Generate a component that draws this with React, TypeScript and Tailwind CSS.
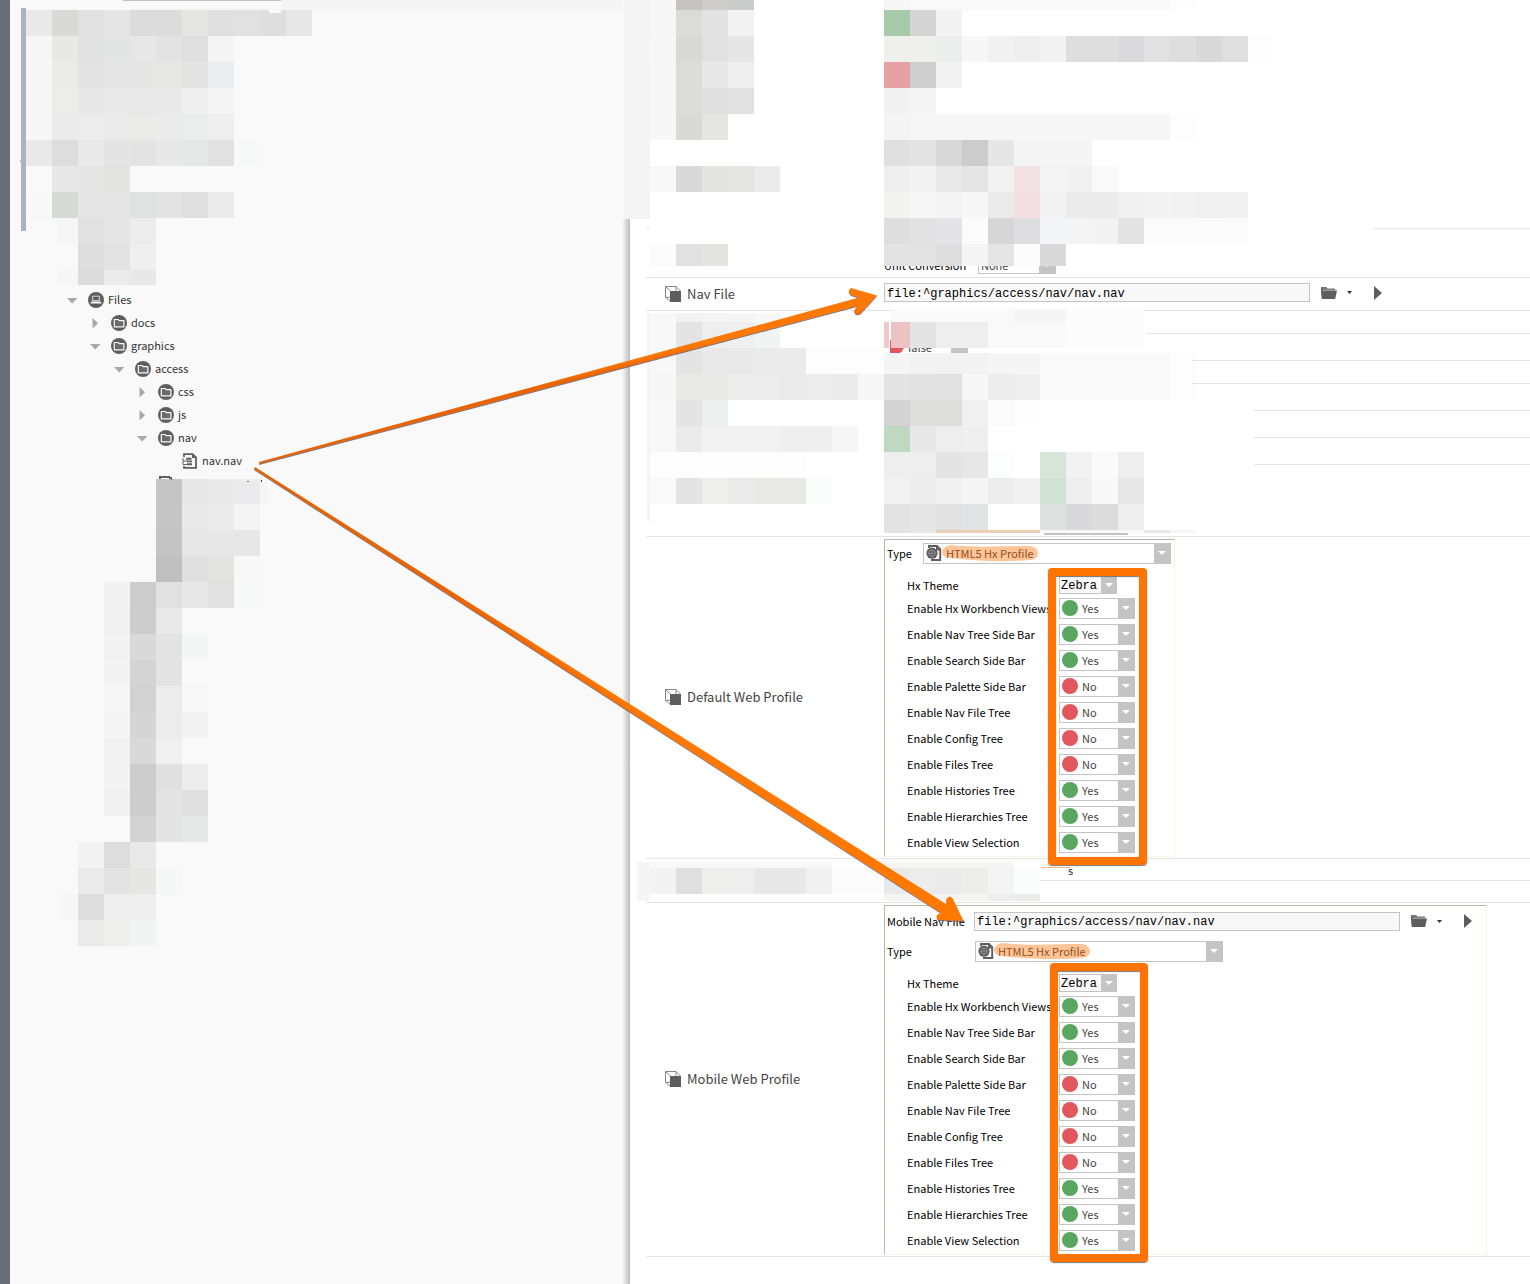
import { useState } from "react";
import type { ReactNode } from "react";

type Strip = [x: number, y: number, h: number, colors: string];

const CELL = 26;

/* Paints strips of colour cells; a "." leaves a cell clear and "*n" repeats a colour. */
function Cells({ strips }: { strips: Strip[] }) {
  const rects: ReactNode[] = [];
  strips.forEach(([startX, y, h, colors], s) => {
    let x = startX;
    colors.split(" ").forEach((token, i) => {
      const [color, times] = token.split("*");
      const count = Number(times ?? 1);
      const end = (Math.floor(x / CELL) + count) * CELL;
      if (color !== ".") {
        rects.push(<rect key={`${s}-${i}`} x={x} y={y} width={end - x} height={h} fill={`#${color}`} />);
      }
      x = end;
    });
  });
  return <>{rects}</>;
}

function Mosaic({ x, y, className, strips, children }: { x: number; y: number; className: string; strips: Strip[]; children?: ReactNode }) {
  return (
    <svg aria-hidden="true" className={`pointer-events-none relative z-10 block w-full overflow-visible ${className}`} shapeRendering="crispEdges">
      <g transform={`translate(${-x} ${-y})`}>
        <Cells strips={strips} />
        {children}
      </g>
    </svg>
  );
}

const treeTop: Strip[] = [
  [26, 10, 26, "e9e9e9 d9d9d6 e1e1e1 e5e5e5 dcdcdc dcdcdc e5e5e3 e0e0e0 e1e1e1 dedede e7e7e7"],
  [26, 36, 26, "f6f6f6 e8e8e5 e2e2e2 e2e5e4 e7e7e7 e3e3e3 e0e0e0 f4f4f4"],
  [26, 62, 26, "f6f6f6 ebebe8 e4e4e4 e6e6e6 e6e6e6 e7e7e4 e3e3e3 ebedef"],
  [26, 88, 26, "f7f7f7 ecece9 e8e8e8 e9e9e9 e9e9e9 e9e9e9 efefef f4f4f4"],
  [26, 114, 26, "f7f7f7 ebebeb ececec ebebeb eaeae7 ebebeb eaedec eeeeee"],
  [26, 140, 26, "e9e9e9 dddddd e9e9e9 e4e4e4 e3e3e3 e8e8e8 e4e8e7 e1e1e1 f6f9f8"],
  [52, 166, 26, "e8e8e8 e6e6e6 e3e3e0"],
  [26, 192, 26, "f8f8f8 d4dad6 e5e5e5 e6e6e6 dfe2e1 e3e3e3 e0e0e0 ebebeb"],
  [58, 218, 26, "f6f6f6 e1e1e1 e5e5e5 ececec"],
  [78, 244, 26, "dddddd e3e3e3 efefef"],
  [58, 270, 15, "f6f6f6 dcdcdc ebebeb e8e8e8"],
];

const treeBottom: Strip[] = [
  [156, 479, 25, "c5c5c5 e7e7e7 e9e9e9 ebebed"],
  [156, 504, 26, "c5c5c5 e9e9e9 ebebeb f4f4f4"],
  [156, 530, 26, "c4c4c4 e7e7e7 e7e7e7 e7e7e7"],
  [156, 556, 26, "c0c0c0 e0e0e0 e3e3e1 f8f8f8"],
  [104, 582, 26, "f1f1f1 cccccc e1e1e1 e7e7e7 e1e1e1 f6f9f8"],
  [104, 608, 26, "f1f1f1 cdcdcd e9e9e9"],
  [104, 634, 26, "f2f2f2 d9d9d9 e3e3e3 f3f6f5"],
  [104, 660, 26, "f3f3f3 d4d4d4 e3e3e3"],
  [104, 686, 26, "f6f6f6 d2d2d2 ececec f8f8f8"],
  [104, 712, 26, "f5f5f5 d5d5d5 ececec f3f3f3"],
  [104, 738, 26, "f2f2f2 d9d9d9 f0f0f0"],
  [104, 764, 26, "f2f2f2 cdcdcd e0e0e0 ececec"],
  [104, 790, 26, "f1f1f1 cdcdcd e4e4e4 dfdfdf"],
  [130, 816, 26, "d3d3d3 e4e4e4 e6e9e8"],
  [78, 842, 26, "f2f2f2 dddddd e9e9e9"],
  [78, 868, 26, "eaeaea e3e3e3 e6e6e3 f5f8f7"],
  [62, 894, 26, "f6f6f6 dddddd eeeeee eeeeee"],
  [78, 920, 26, "eaeaea eeeeeb f2f4f3"],
];

const sheetTop: Strip[] = [
  [650, 0, 10, "f7f7f7 c5c3c1 cfcdcb cacccb .*5 f7f7f7 f9f9f9*10 fdfdfd"],
  [650, 10, 26, "f7f7f7 dbdbd8 e2e2e2 f2f2f2 .*5 a6cbaa d5d5d5 f3f3f3"],
  [650, 36, 26, "f6f6f6 d8d8d6 e1e1e1 e6e6e6 .*5 efefec efefec ebeeed f7f7f7 f1f1f1 eeeeee f3f3f3 dedede dedede dadadd e1e1e1 dedede d9d9d9 dfdfdf fdfdfd"],
  [650, 62, 26, "f7f7f7 dcdcd9 e8e8e8 eeeeee .*5 e5a0a3 cecece f2f2f2"],
  [650, 88, 26, "f7f7f7 dcdcd9 e0e0e0 e1e1e1 .*5 f1f1f1 f4f4f4"],
  [650, 114, 26, "f7f7f7 d9d9d6 e5e5e2 .*6 f4f4f4 f6f6f6*10 fdfdfd"],
  [884, 140, 26, "e0e0e0 e3e3e3 d8d8d8 cccccc e6e6e6 f5f5f5*3"],
  [650, 166, 26, "f8f8f8 d9d9d9 e4e4e1 e5e5e2 ebebeb .*4 efefef f2f2f2 e9e9e9 e5e5e5 f2f2f2 f3e2e3 f4f4f4 f1f1f1 f9f9f9"],
  [884, 192, 26, "f3f3f0 f7f7f7 f4f4f4 f7f7f7 ebebeb f4dfe1 f3f3f3 ebebeb ebebeb f0f0f0 f3f3f3 f2f2f2 f0f0f0 f1f1f1"],
  [884, 218, 26, "dedede e2e2e2 e4e4e7 fbfbfb d6d6d6 dedee1 f3f4f7 f4f4f4 f3f3f3 e4e4e4 fbfbfb*4"],
  [650, 244, 22, "fbfbfb e1e1e1 e4e4e1 .*6 e3e3e3 e3e3e3 dddddd f5f5f5 e5e5e5 fcfcfc d9d9d9"],
];

const sheetMiddleA: Strip[] = [
  [650, 313, 9, "f8f8f8 f2f2f2 f4f4f4 f5f5f5 f8f8f8"],
  [650, 322, 26, "f8f8f8 e4e4e4 eeeeee efefef f1f4f3"],
  [891, 309, 13, "fafafa*5 f5f5f5*2 fcfcfc*3"],
  [891, 322, 26, "edc2c4 e4e4e4 eeeeee*2 f9f9f9*3 fcfcfc*3"],
];

const sheetMiddleB: Strip[] = [
  [650, 348, 26, "f8f8f8 e4e4e4 e9e9e9 e9e9e9 ebebeb*2 fdfdfd*3"],
  [884, 353, 21, "f5f5f5 f2f2f2*3 f5f5f5*2 f9f9f9*5 fdfdfd"],
  [650, 374, 26, "f7f7f7 e9e9e6 e9e9e6 ececec ececec eaeaea ececec ebebeb f6f6f6 e3e3e3 e2e2e2 e1e1e1 f7f7f7 ededed efefef f9f9f9*5 fdfdfd"],
  [650, 400, 26, "f8f8f8 e4e4e4 ecefee .*6 d3d3d3 dddddb dddddb f0f0f0 fbfbfb fdfdfd"],
  [650, 426, 26, "f8f8f8 ebebeb f2f2f2*3 efefef*2 f6f6f6 . bfd8c2 e7e7e7 eeeeee efefef"],
  [650, 452, 26, "fdfdfd*6 .*3 eeeeee eeeeee e4e4e4 e7e7e7 fcfdfd . d6e7d9 f2f2f2 fafafa eeeeee"],
  [650, 478, 26, "f9f9f9 e4e4e4 eeeeeb eaeaea e9e9e6 e9e9e6 fbfdfc .*2 f2f2f2 ededed f1f1f1 f5f5f5 ededed f1f1f1 cfe2d3 efefef f8f8f8 e7e7e7"],
  [884, 504, 26, "e3e3e3 e6e6e6 e1e1e1 e2e3e5 .*2 dfe1e0 d9d9db dcdcdc eeeeee"],
  [884, 530, 3, "e3e3e3 e6e6e6 e9cdb5 ecceb4*3 f8f8f6*4 e8e8e4 f8f8f6"],
];

const sheetLower: Strip[] = [
  [650, 862, 6, "f8f8f8*7 .*2 f5f5f3*5"],
  [637, 862, 39, "f5f5f5"],
  [650, 868, 26, "f3f3f3 dfdfdf eeeeec eeeeee e8e8e8*2 f1f1f1 fcfcfc*2 e9e9e9 ececec ebebeb ededeb f4f4f4 fafdfc"],
  [884, 894, 7, "f4f4f2*4 eeeeee ebebea"],
];

const icon = "#5e5e5e";

function FolderCircle() {
  return (
    <svg width="16" height="16" viewBox="0 0 16 16" className="shrink-0" aria-hidden="true">
      <circle cx="8" cy="8" r="8" fill={icon} />
      <path d="M3.300 4.500h3.800l1.200 1.200h4.600v6.100H3.300z" fill="#6a6a6a" stroke="#f9f9f9" strokeWidth="1.200" strokeLinejoin="round" />
    </svg>
  );
}

function DriveCircle() {
  return (
    <svg width="16" height="16" viewBox="0 0 16 16" className="shrink-0" aria-hidden="true">
      <circle cx="8" cy="8" r="8" fill={icon} />
      <path d="M4.600 4.200h6.800v4.400H4.600z" fill="none" stroke="#d8d8d8" strokeWidth="1" />
      <path d="M3.400 9.400h9.200l1 2.200H2.400z" fill="#f9f9f9" />
    </svg>
  );
}

function NavDoc() {
  return (
    <svg width="16" height="16" viewBox="0 0 16 16" className="shrink-0" aria-hidden="true">
      <path d="M2 4V1.100h8.600L14 4.400v10.500H2V13" fill="none" stroke={icon} strokeWidth="1.800" />
      <path d="M10 1l4 4h-4z" fill={icon} />
      <path d="M1 5v6.500h4M1 8h4" fill="none" stroke={icon} strokeWidth="1" />
      <path d="M4 4.800h5.500v2H4zM5 7.400h5v1.800H5zM5 10.300h5v2H5z" fill={icon} />
    </svg>
  );
}

function ProfileDoc() {
  return (
    <svg width="16" height="16" viewBox="0 0 16 16" className="shrink-0" aria-hidden="true">
      <path d="M3 3V1h8l3.200 3.200V15H5" fill="none" stroke={icon} strokeWidth="1.900" />
      <path d="M10 1l4.400 4.400H10z" fill={icon} />
      <circle cx="6" cy="8.200" r="5.600" fill={icon} />
      <circle cx="6" cy="8.200" r="3.200" fill="none" stroke="#9a9a9a" strokeWidth="0.700" />
      <path d="M6 4v8.400M1.800 8.200h8.400" stroke="#9a9a9a" strokeWidth="0.700" />
    </svg>
  );
}

function Cube() {
  return (
    <svg width="16" height="16" viewBox="0 0 16 16" className="shrink-0" aria-hidden="true">
      <path d="M.5.5h10.500l4.500 4.700M.5.5v10.800l5 4.200M.5.5l5 4.700M11 .5V5M.5 11.300H6" fill="none" stroke="#858585" strokeWidth="1" />
      <path d="M5 5H16V16H5z" fill={icon} />
    </svg>
  );
}

function FolderOpen() {
  return (
    <svg width="16" height="14" viewBox="0 0 16 14" aria-hidden="true">
      <path d="M0 1h5.400l1 1.600H14v2H0z" fill="#777" />
      <path d="M0 1v12l1-8.400h1z" fill={icon} />
      <path d="M.3 4.600H16L14.200 13H.8z" fill={icon} />
      <path d="M2 4.200h13.600" stroke="#a5a5a5" strokeWidth="0.800" />
    </svg>
  );
}

function Toggle({ open }: { open: boolean }) {
  return (
    <svg width="12" height="12" viewBox="0 0 12 12" aria-hidden="true">
      <path d={open ? "M1 4h10.400L6.200 9.400z" : "M3.500 1l5.600 5.200-5.600 5.200z"} fill="#a9a9a9" />
    </svg>
  );
}

type NodeKind = "drive" | "folder" | "navdoc";
type TreeNode = { name: string; pad: string; kind: NodeKind; open?: boolean };

const nodes: TreeNode[] = [
  { name: "Files", pad: "pl-[56px]", kind: "drive", open: true },
  { name: "docs", pad: "pl-[79px]", kind: "folder", open: false },
  { name: "graphics", pad: "pl-[79px]", kind: "folder", open: true },
  { name: "access", pad: "pl-[103px]", kind: "folder", open: true },
  { name: "css", pad: "pl-[126px]", kind: "folder", open: false },
  { name: "js", pad: "pl-[126px]", kind: "folder", open: false },
  { name: "nav", pad: "pl-[126px]", kind: "folder", open: true },
  { name: "nav.nav", pad: "pl-[150px]", kind: "navdoc" },
];

function Tree() {
  return (
    <ul className="leading-[23px] text-[#333]">
      {nodes.map((n) => (
        <li key={n.name} className={`flex h-[23px] items-center ${n.pad}`}>
          {n.open === undefined ? (
            <span className="w-[22px]" />
          ) : (
            <button type="button" aria-label={`Toggle ${n.name}`} aria-expanded={n.open} className="w-[22px]">
              <Toggle open={n.open} />
            </button>
          )}
          {n.kind === "drive" ? <DriveCircle /> : n.kind === "folder" ? <FolderCircle /> : <NavDoc />}
          <span className="pl-1">{n.name}</span>
        </li>
      ))}
    </ul>
  );
}

function Caret({ className }: { className: string }) {
  return (
    <span className={`pointer-events-none flex shrink-0 items-center justify-center bg-[#c4c4c4] ${className}`}>
      <svg width="8" height="4" viewBox="0 0 8 4" aria-hidden="true">
        <path d="M0 0h8L4 4z" fill="#fff" />
      </svg>
    </span>
  );
}

function YesNo({ label, id, initial }: { label: string; id: string; initial: boolean }) {
  const [on, setOn] = useState(initial);
  return (
    <div className="flex h-[26px] items-center">
      <label htmlFor={id} className="w-[152px] whitespace-nowrap">
        {label}
      </label>
      <div className="flex h-[21px] w-[76px] items-center border border-[#c4c4c4] bg-white pl-[2px]">
        <span className={`size-4 shrink-0 rounded-full ${on ? "bg-[#58a65f]" : "bg-[#e2565e]"}`} />
        <select
          id={id}
          value={on ? "Yes" : "No"}
          onChange={(e) => setOn(e.target.value === "Yes")}
          className="h-full min-w-0 flex-1 appearance-none pb-px pl-1 text-[#444] outline-none"
        >
          <option>Yes</option>
          <option>No</option>
        </select>
        <Caret className="h-full w-4" />
      </div>
    </div>
  );
}

const options: [string, boolean][] = [
  ["Enable Hx Workbench Views", true],
  ["Enable Nav Tree Side Bar", true],
  ["Enable Search Side Bar", true],
  ["Enable Palette Side Bar", false],
  ["Enable Nav File Tree", false],
  ["Enable Config Tree", false],
  ["Enable Files Tree", false],
  ["Enable Histories Tree", true],
  ["Enable Hierarchies Tree", true],
  ["Enable View Selection", true],
];

function ProfileOptions({ prefix, frameClass }: { prefix: string; frameClass: string }) {
  return (
    <div className="relative pt-[9px] pb-px pl-[22px]">
      <div className="flex h-[20px] items-center">
        <label htmlFor={`${prefix}-theme`} className="w-[152px] pb-px">
          Hx Theme
        </label>
        <div className="flex h-[18px] w-[58px] items-center border border-[#c4c4c4] bg-[#f8f8f8]">
          <select
            id={`${prefix}-theme`}
            className="h-full min-w-0 flex-1 appearance-none pt-[2px] pl-px font-['Liberation_Mono'] text-[12px] leading-[14px] outline-none"
          >
            <option>Zebra</option>
            <option>Lucid</option>
          </select>
          <Caret className="h-full w-[15px]" />
        </div>
      </div>
      {options.map(([label, on], i) => (
        <YesNo key={label} id={`${prefix}-${i}`} label={label} initial={on} />
      ))}
      <div
        className={`pointer-events-none absolute rounded border-8 border-[#ff7300] shadow-[0_1px_1px_#777,inset_0_1px_1px_#777] ${frameClass}`}
      />
    </div>
  );
}

function TypeRow({ prefix, labelClass }: { prefix: string; labelClass: string }) {
  return (
    <div className="flex h-[26px] items-center pl-[2px]">
      <label htmlFor={`${prefix}-type`} className={labelClass}>
        Type
      </label>
      <div className="flex h-[21px] w-[248px] items-center border border-[#c4c4c4] bg-white pl-[2px]">
        <ProfileDoc />
        <div className="relative flex h-full min-w-0 flex-1 items-center">
          <svg className="absolute top-0 left-0" width="96" height="18" viewBox="0 0 96 18" aria-hidden="true">
            <path d="M8 1C35 4 60 2 88 2Q96 3 96 9T88 16Q50 19 8 14Q0 13 0 8T8 1Z" fill="#ffc599" />
          </svg>
          <select
            id={`${prefix}-type`}
            className="relative h-full w-full appearance-none bg-transparent pb-px pl-1 text-[#914d18] outline-none"
          >
            <option>HTML5 Hx Profile</option>
          </select>
        </div>
        <Caret className="h-full w-4" />
      </div>
    </div>
  );
}

function NavFileField({ id, label }: { id: string; label: string }) {
  return (
    <div className="flex items-center">
      <input
        id={id}
        aria-label={label}
        defaultValue="file:^graphics/access/nav/nav.nav"
        className="h-[19px] w-[426px] border border-[#c4c4c4] bg-[#f8f8f8] px-[2px] pt-[2px] font-['Liberation_Mono'] text-[12px] leading-[14px] text-black outline-none"
      />
      <button type="button" aria-label="Browse" className="ml-[11px]">
        <FolderOpen />
      </button>
      <button type="button" aria-label="Browse options" className="ml-[10px]">
        <svg width="5" height="3" viewBox="0 0 5 3" aria-hidden="true">
          <path d="M0 0h5L2.500 3z" fill="#333" />
        </svg>
      </button>
      <button type="button" aria-label="Go" className="ml-[22px]">
        <svg width="8" height="14" viewBox="0 0 8 14" aria-hidden="true">
          <path d="M0 0l8 7-8 7z" fill={icon} />
        </svg>
      </button>
    </div>
  );
}

function SheetRow({ label, className, children }: { label: string; className: string; children: ReactNode }) {
  return (
    <section className={`ml-4 flex border-b border-[#e4e4e4] ${className}`}>
      <div className="flex w-[238px] shrink-0 items-center gap-[6px] pl-[19px] text-[13px] leading-5 text-[#444]">
        <Cube />
        <span>{label}</span>
      </div>
      {children}
    </section>
  );
}

function Arrows() {
  return (
    <svg aria-hidden="true" className="pointer-events-none absolute top-0 left-0 z-20" width="1000" height="940">
      <defs>
        <linearGradient id="shaft-up" gradientUnits="userSpaceOnUse" x1="640" y1="355" x2="642" y2="364">
          <stop offset="0.3" stopColor="#ff7804" />
          <stop offset="1" stopColor="#e96400" />
        </linearGradient>
        <linearGradient id="shaft-down" gradientUnits="userSpaceOnUse" x1="612" y1="691" x2="605" y2="701">
          <stop offset="0.3" stopColor="#ff7804" />
          <stop offset="1" stopColor="#e96400" />
        </linearGradient>
        <filter id="drop" x="-5%" y="-5%" width="110%" height="110%">
          <feDropShadow dx="0" dy="1" stdDeviation="0.5" floodColor="#555" floodOpacity="0.8" />
        </filter>
      </defs>
      <g filter="url(#drop)">
        <path
          d="M259 462L859 297.500 851 295Q846.500 291 851 288L877 295.500 861 313Q856 316.500 854 311L857 306 259 464z"
          fill="url(#shaft-up)"
        />
        <path
          d="M255 467L946 904 946.500 899Q949.500 894 953 899L963.500 921 939 920Q934 916.500 939 913.500L942 913.500 254 469z"
          fill="url(#shaft-down)"
        />
      </g>
    </svg>
  );
}

export default function App() {
  return (
    <div className="relative flex min-h-screen bg-white font-['Noto_Sans_CJK_SC',sans-serif] text-[11px] leading-[18px] text-black">
      <div className="w-[10px] shrink-0 bg-[#686e78]" />
      <aside className="flex w-[620px] shrink-0 bg-[#f9f9f9]">
        <div className="w-[612px]">
          <Mosaic x={10} y={0} className="h-[288px]" strips={treeTop}>
            <rect x="281" y="0" width="341" height="10" fill="#f5f5f5" />
            <rect x="130" y="8" width="139" height="2" fill="#f6f6f6" />
            <rect x="123" y="0" width="158" height="1" fill="#c0c0c0" />
            <rect x="269" y="1" width="12" height="12" fill="#f9f9f9" />
            <rect x="21" y="8" width="5" height="223" fill="#aeb3b7" />
            <rect x="20" y="160" width="1" height="2" fill="#aeb3b7" />
          </Mosaic>
          <Tree />
          <Mosaic x={10} y={472} className="h-[480px]" strips={treeBottom}>
            <path d="M160 479v-2h9l3 2" fill="none" stroke={icon} strokeWidth="2" />
            <rect x="260" y="482" width="8" height="22" fill="#f6f6f6" />
            <rect x="247" y="481" width="2" height="1" fill="#777" />
            <rect x="261" y="480" width="1" height="2" fill="#334" />
          </Mosaic>
        </div>
        <div className="mt-[219px] w-2 bg-linear-to-r from-[#f9f9f9] to-[#bcbcbc]" />
      </aside>

      <main className="min-w-0 flex-1">
        <Mosaic x={630} y={0} className="h-[266px]" strips={sheetTop}>
          <rect x="624" y="0" width="26" height="219" fill="#f4f4f4" />
          <rect x="646" y="228" width="4" height="1" fill="#e4e4e4" />
          <rect x="1373" y="228" width="100%" height="1" fill="#e4e4e4" />
        </Mosaic>
        <div className="-mt-[10px] ml-4 flex h-[22px] items-end border-b border-[#e4e4e4] pb-[3px] pl-[238px]">
          <label htmlFor="unit" className="w-[94px] whitespace-nowrap">
            Unit Conversion
          </label>
          <div className="flex h-[18px] w-[78px] items-center border border-[#c4c4c4] bg-white">
            <select id="unit" className="h-full min-w-0 flex-1 appearance-none pl-[2px] leading-4 text-[#444] outline-none">
              <option>None</option>
            </select>
            <Caret className="h-full w-4" />
          </div>
        </div>

        <SheetRow label="Nav File" className="h-[33px]">
          <div className="flex h-[29px] items-center">
            <NavFileField id="nav-file" label="Nav File" />
          </div>
        </SheetRow>

        <div className="ml-4 border-b border-[#e4e4e4]">
          <Mosaic x={646} y={311} className="h-[37px]" strips={sheetMiddleA}>
            <rect x="884" y="322" width="5" height="26" fill="#f1c9cb" />
            <rect x="647" y="313" width="3" height="35" fill="#f4f4f4" />
            <rect x="1146" y="333" width="100%" height="1" fill="#e4e4e4" />
          </Mosaic>
          <div className="-mt-[8px] -mb-[5px] flex h-[18px] items-start pl-[244px]">
            <span className="h-[14px] w-[14px] rounded-br-lg bg-[#e2565e]" />
            <span className="w-[47px] pl-1 leading-[14px] text-[#444]">false</span>
            <span className="h-[14px] w-[17px] bg-[#c4c4c4]" />
          </div>
          <Mosaic x={646} y={353} className="h-[183px]" strips={sheetMiddleB}>
            <rect x="647" y="348" width="3" height="173" fill="#f4f4f4" />
            <rect x="1044" y="533" width="84" height="2" fill="#c4c4c4" />
            <rect x="1192" y="360" width="100%" height="1" fill="#e4e4e4" />
            <rect x="1192" y="383" width="100%" height="1" fill="#e4e4e4" />
            <rect x="1254" y="410" width="100%" height="1" fill="#e4e4e4" />
            <rect x="1254" y="437" width="100%" height="1" fill="#e4e4e4" />
            <rect x="1254" y="464" width="100%" height="1" fill="#e4e4e4" />
          </Mosaic>
        </div>

        <SheetRow label="Default Web Profile" className="pb-px">
          <div className="mt-[2px] w-[291px] border border-t-[#b8b8a8] border-r-[#fbf3dc] border-b-[#f7f7e8] border-l-[#b8b8a8]">
            <TypeRow prefix="default" labelClass="w-9" />
            <ProfileOptions prefix="default" frameClass="top-[2px] -bottom-[9px] left-[163px] w-[99px]" />
          </div>
        </SheetRow>

        <div className="ml-4 border-b border-[#e4e4e4]">
          <Mosaic x={646} y={859} className="h-[43px]" strips={sheetLower}>
            <rect x="1039" y="880" width="100%" height="1" fill="#e4e4e4" />
            <rect x="1041" y="867" width="29" height="1" fill="#f6b98c" />
            <text x="1068" y="875" fontSize="11" fill="#333">
              s
            </text>
          </Mosaic>
        </div>

        <SheetRow label="Mobile Web Profile" className="pb-px">
          <div className="mt-[2px] w-[603px] border border-t-[#b8b8a8] border-r-[#fbf3dc] border-b-[#f7f7e8] border-l-[#b8b8a8]">
            <div className="mb-[2px] flex h-[30px] items-center pl-[2px]">
              <label htmlFor="mobile-nav-file" className="w-[87px] whitespace-nowrap">
                Mobile Nav File
              </label>
              <NavFileField id="mobile-nav-file" label="Mobile Nav File" />
            </div>
            <TypeRow prefix="mobile" labelClass="w-[88px]" />
            <ProfileOptions prefix="mobile" frameClass="-top-px -bottom-[8px] left-[165px] w-[98px]" />
          </div>
        </SheetRow>
      </main>
      <Arrows />
    </div>
  );
}
